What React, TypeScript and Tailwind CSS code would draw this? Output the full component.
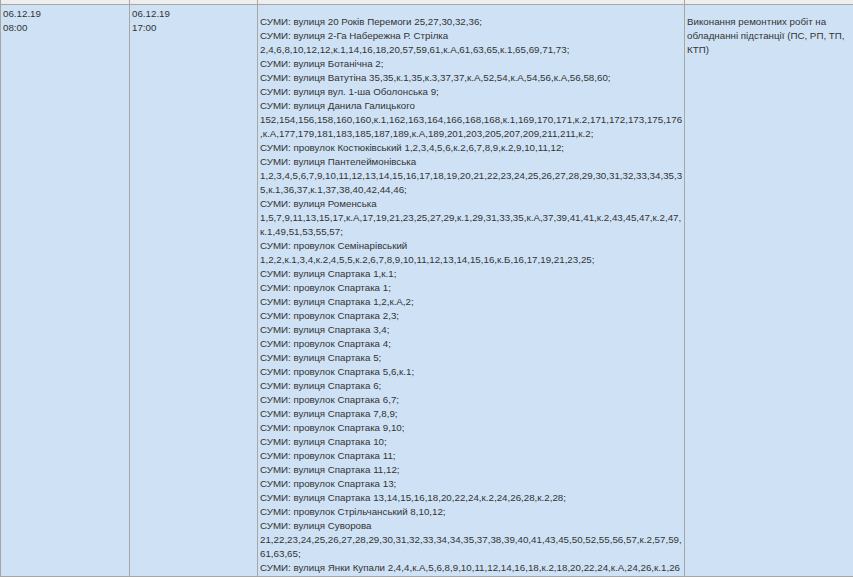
const lines = [
  "СУМИ: вулиця 20 Років Перемоги 25,27,30,32,36;",
  "СУМИ: вулиця 2-Га Набережна Р. Стрілка",
  "2,4,6,8,10,12,12,к.1,14,16,18,20,57,59,61,к.А,61,63,65,к.1,65,69,71,73;",
  "СУМИ: вулиця Ботанічна 2;",
  "СУМИ: вулиця Ватутіна 35,35,к.1,35,к.3,37,37,к.А,52,54,к.А,54,56,к.А,56,58,60;",
  "СУМИ: вулиця вул. 1-ша Оболонська 9;",
  "СУМИ: вулиця Данила Галицького",
  "152,154,156,158,160,160,к.1,162,163,164,166,168,168,к.1,169,170,171,к.2,171,172,173,175,176",
  ",к.А,177,179,181,183,185,187,189,к.А,189,201,203,205,207,209,211,211,к.2;",
  "СУМИ: провулок Костюківський 1,2,3,4,5,6,к.2,6,7,8,9,к.2,9,10,11,12;",
  "СУМИ: вулиця Пантелеймонівська",
  "1,2,3,4,5,6,7,9,10,11,12,13,14,15,16,17,18,19,20,21,22,23,24,25,26,27,28,29,30,31,32,33,34,35,3",
  "5,к.1,36,37,к.1,37,38,40,42,44,46;",
  "СУМИ: вулиця Роменська",
  "1,5,7,9,11,13,15,17,к.А,17,19,21,23,25,27,29,к.1,29,31,33,35,к.А,37,39,41,41,к.2,43,45,47,к.2,47,",
  "к.1,49,51,53,55,57;",
  "СУМИ: провулок Семінарівський",
  "1,2,2,к.1,3,4,к.2,4,5,5,к.2,6,7,8,9,10,11,12,13,14,15,16,к.Б,16,17,19,21,23,25;",
  "СУМИ: вулиця Спартака 1,к.1;",
  "СУМИ: провулок Спартака 1;",
  "СУМИ: вулиця Спартака 1,2,к.А,2;",
  "СУМИ: провулок Спартака 2,3;",
  "СУМИ: вулиця Спартака 3,4;",
  "СУМИ: провулок Спартака 4;",
  "СУМИ: вулиця Спартака 5;",
  "СУМИ: провулок Спартака 5,6,к.1;",
  "СУМИ: вулиця Спартака 6;",
  "СУМИ: провулок Спартака 6,7;",
  "СУМИ: вулиця Спартака 7,8,9;",
  "СУМИ: провулок Спартака 9,10;",
  "СУМИ: вулиця Спартака 10;",
  "СУМИ: провулок Спартака 11;",
  "СУМИ: вулиця Спартака 11,12;",
  "СУМИ: провулок Спартака 13;",
  "СУМИ: вулиця Спартака 13,14,15,16,18,20,22,24,к.2,24,26,28,к.2,28;",
  "СУМИ: провулок Стрільчанський 8,10,12;",
  "СУМИ: вулиця Суворова",
  "21,22,23,24,25,26,27,28,29,30,31,32,33,34,34,35,37,38,39,40,41,43,45,50,52,55,56,57,к.2,57,59,",
  "61,63,65;",
  "СУМИ: вулиця Янки Купали 2,4,4,к.А,5,6,8,9,10,11,12,14,16,18,к.2,18,20,22,24,к.А,24,26,к.1,26",
];

export default function App() {
  return (
    <div className="grid h-[577px] w-[853px] grid-cols-[129px_128px_427px_169px] grid-rows-[4px_573px] overflow-hidden bg-white font-['Liberation_Sans',Arial,sans-serif] text-[9.75px] leading-[14px] text-[#333333]">
      <div className="border-l border-[#a6a6a6] bg-[#eeeeee]" />
      <div className="border-l border-[#a6a6a6] bg-[#eeeeee]" />
      <div className="border-l border-[#a6a6a6] bg-[#eeeeee]" />
      <div className="border-l border-[#a6a6a6] bg-[#eeeeee]" />
      <div className="border-y border-l border-[#a6a6a6] bg-[#cfe2f5] pl-[2px] pt-[2px]">
        <div>06.12.19</div>
        <div>08:00</div>
      </div>
      <div className="border-y border-l border-[#a6a6a6] bg-[#cfe2f5] pl-[2px] pt-[2px]">
        <div>06.12.19</div>
        <div>17:00</div>
      </div>
      <div className="border-y border-l border-[#a6a6a6] bg-[#cfe2f5] pl-[2px] pt-[10px]">
        {lines.map((line, i) => (
          <div key={i} className="whitespace-nowrap">{line}</div>
        ))}
      </div>
      <div className="border-y border-l border-[#a6a6a6] bg-[#cfe2f5] pl-[2px] pt-[10px]">
        <div>Виконання ремонтних робіт на</div>
        <div>обладнанні підстанції (ПС, РП, ТП,</div>
        <div>КТП)</div>
      </div>
    </div>
  );
}
